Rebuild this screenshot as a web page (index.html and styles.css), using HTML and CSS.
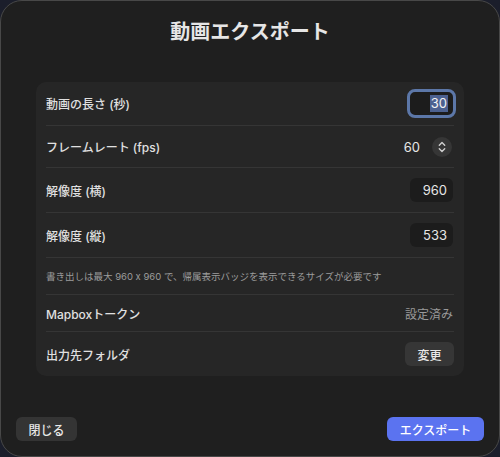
FILE: index.html
```html
<!DOCTYPE html>
<html lang="ja">
<head>
<meta charset="utf-8">
<title>動画エクスポート</title>
<link rel="stylesheet" href="styles.css">
</head>
<body>
<div class="window">
  <h1 class="title">動画エクスポート</h1>
  <div class="card">
    <div class="row r1">
      <span class="label">動画の長さ (秒)</span>
      <div class="field focused"><span class="sel">30</span></div>
    </div>
    <div class="row r2">
      <span class="label">フレームレート (fps)</span>
      <div class="picker">
        <span class="num">60</span>
        <span class="stepper">
          <svg width="20" height="20" viewBox="0 0 20 20"><path d="M7.3 8.2 L10 5.6 L12.7 8.2 M7.3 11.8 L10 14.4 L12.7 11.8" fill="none" stroke="#d0d0d0" stroke-width="1.4" stroke-linecap="round" stroke-linejoin="round"/></svg>
        </span>
      </div>
    </div>
    <div class="row r3">
      <span class="label">解像度 (横)</span>
      <div class="field">960</div>
    </div>
    <div class="row r4">
      <span class="label">解像度 (縦)</span>
      <div class="field">533</div>
    </div>
    <div class="row note">書き出しは最大 960 x 960 で、帰属表示バッジを表示できるサイズが必要です</div>
    <div class="row r6">
      <span class="label">Mapboxトークン</span>
      <span class="status">設定済み</span>
    </div>
    <div class="row r7 last">
      <span class="label">出力先フォルダ</span>
      <button class="btn small">変更</button>
    </div>
  </div>
  <div class="footer">
    <button class="btn">閉じる</button>
    <button class="btn primary">エクスポート</button>
  </div>
</div>
</body>
</html>
```

FILE: styles.css
```css
html, body {
  margin: 0;
  padding: 0;
  background: #1b1e2b;
}
body {
  width: 500px;
  height: 457px;
  font-family: Inter, "Noto Sans CJK JP", sans-serif;
  color: #dedede;
}
.window {
  box-sizing: border-box;
  width: 500px;
  height: 457px;
  background: #1f1f1f;
  border: 1px solid #484848;
  border-radius: 22px;
  display: flex;
  flex-direction: column;
}
.title {
  margin: 0;
  height: 59px;
  display: flex;
  align-items: center;
  justify-content: center;
  font-size: 20px;
  font-weight: 700;
  color: #e6e6e6;
}
.card {
  margin: 22px 35px 0;
  padding: 0 10px;
  background: #262626;
  border-radius: 10px;
}
.row {
  display: flex;
  align-items: center;
  justify-content: space-between;
  border-bottom: 1px solid #353535;
  box-sizing: border-box;
}
.row.last { border-bottom: none; }
.r1 { height: 44px; }
.r2 { height: 42px; }
.r3 { height: 45px; }
.r4 { height: 45px; }
.note { height: 37px; font-size: 9.5px; color: #9c9c9c; }
.r6 { height: 37px; }
.r7 { height: 44px; }
.label {
  font-size: 12px;
  font-weight: 500;
  color: #e0e0e0;
}
.field {
  box-sizing: border-box;
  width: 43px;
  height: 24px;
  margin-right: 1px;
  background: #1c1c1c;
  border-radius: 6px;
  font-size: 13px;
  color: #e6e6e6;
  display: flex;
  align-items: center;
  justify-content: flex-end;
  padding-right: 6px;
}
.field.focused {
  width: 49px;
  height: 29px;
  margin-right: -2px;
  border: 3px solid #5c77a8;
  border-radius: 8px;
  padding-right: 5px;
}
.sel {
  background: #4c6190;
  color: #f2f2f2;
  line-height: 17px;
  padding: 0 1px;
}
.picker {
  display: flex;
  align-items: center;
  gap: 12px;
  margin-right: 2px;
}
.num {
  font-size: 13px;
  color: #e6e6e6;
}
.stepper {
  width: 20px;
  height: 20px;
  border-radius: 50%;
  background: #363636;
  display: flex;
}
.status {
  font-size: 12px;
  color: #9a9a9a;
  margin-right: 1px;
}
.btn {
  font-family: Inter, "Noto Sans CJK JP", sans-serif;
  font-size: 12px;
  font-weight: 500;
  color: #e8e8e8;
  background: #343434;
  border: none;
  border-radius: 6px;
  height: 24px;
  width: 61px;
  padding: 0;
}
.btn.small {
  width: 49px;
  margin-right: 0;
  background: #363636;
}
.btn.primary {
  width: 97px;
  background: #5b73f0;
  color: #ffffff;
}
.footer {
  margin-top: auto;
  padding: 0 15px 15px;
  display: flex;
  justify-content: space-between;
}
```
